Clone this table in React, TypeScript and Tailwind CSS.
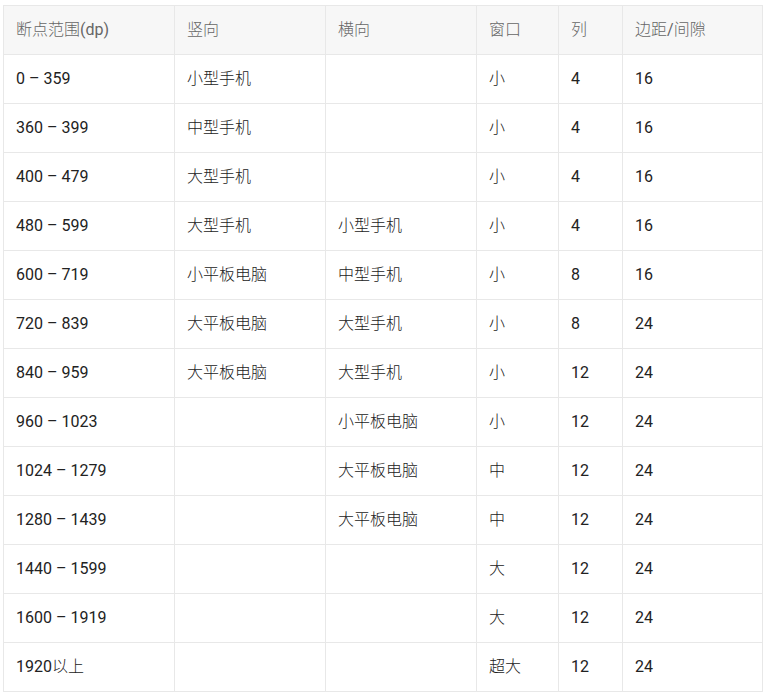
import React from 'react';

const rows: string[][] = [
  ['0 – 359', '小型手机', '', '小', '4', '16'],
  ['360 – 399', '中型手机', '', '小', '4', '16'],
  ['400 – 479', '大型手机', '', '小', '4', '16'],
  ['480 – 599', '大型手机', '小型手机', '小', '4', '16'],
  ['600 – 719', '小平板电脑', '中型手机', '小', '8', '16'],
  ['720 – 839', '大平板电脑', '大型手机', '小', '8', '24'],
  ['840 – 959', '大平板电脑', '大型手机', '小', '12', '24'],
  ['960 – 1023', '', '小平板电脑', '小', '12', '24'],
  ['1024 – 1279', '', '大平板电脑', '中', '12', '24'],
  ['1280 – 1439', '', '大平板电脑', '中', '12', '24'],
  ['1440 – 1599', '', '', '大', '12', '24'],
  ['1600 – 1919', '', '', '大', '12', '24'],
  ['1920以上', '', '', '超大', '12', '24'],
];

const headers = ['断点范围(dp)', '竖向', '横向', '窗口', '列', '边距/间隙'];
const widths = ['w-[171px]', 'w-[151px]', 'w-[151px]', 'w-[82px]', 'w-[64px]', 'w-[140px]'];

// CJK glyphs in the table render in a lighter weight than the Latin digits
function Text({ value }: { value: string }) {
  const parts = value.split(/([\u4e00-\u9fff]+)/).filter(Boolean);
  return (
    <>
      {parts.map((p, i) =>
        /[\u4e00-\u9fff]/.test(p) ? (
          <span key={i} className="font-light">{p}</span>
        ) : (
          <span key={i}>{p}</span>
        )
      )}
    </>
  );
}

export default function App() {
  return (
    <div
      className="bg-white pt-[5px] pl-[3px]"
      style={{ fontFamily: 'Roboto, "Noto Sans CJK SC", sans-serif' }}
    >
      <table className="border-collapse table-fixed w-[759px] text-[16px]">
        <thead>
          <tr className="bg-[#f7f7f7]">
            {headers.map((h, i) => (
              <th
                key={h}
                className={`${widths[i]} h-[49px] border border-[#e8e8e8] pl-[12px] text-left font-normal text-[#666]`}
              >
                <Text value={h} />
              </th>
            ))}
          </tr>
        </thead>
        <tbody>
          {rows.map((row, r) => (
            <tr key={r}>
              {row.map((cell, c) => (
                <td
                  key={c}
                  className="h-[49px] border border-[#e8e8e8] pl-[12px] text-[#222]"
                >
                  <Text value={cell} />
                </td>
              ))}
            </tr>
          ))}
        </tbody>
      </table>
    </div>
  );
}
